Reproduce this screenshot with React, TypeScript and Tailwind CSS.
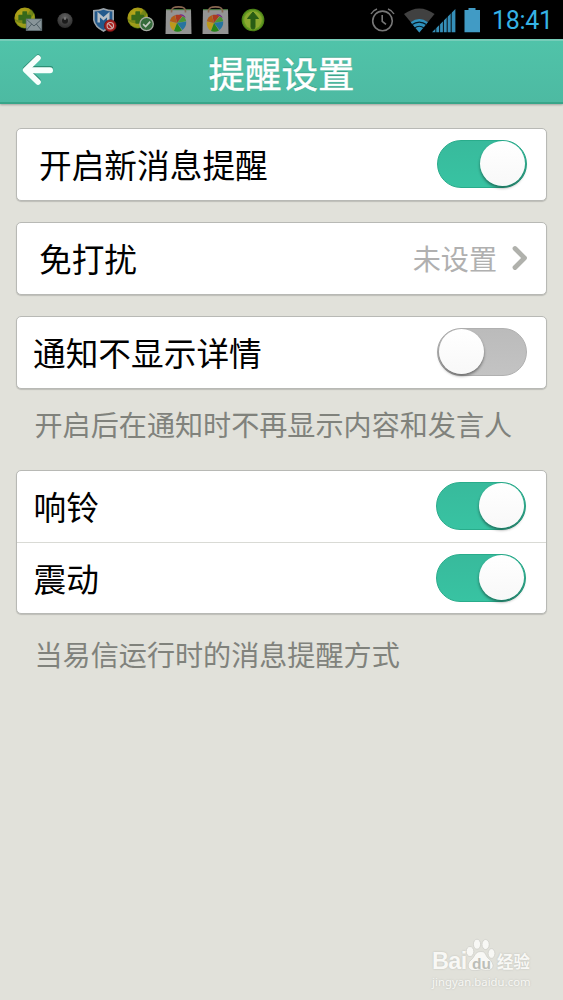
import type { ReactNode } from 'react';

const FONT = "font-['Noto_Sans_CJK_SC',sans-serif]";

function CloverBadge({ kind }: { kind: 'mail' | 'check' }) {
  return (
    <svg width="30" height="28" viewBox="0 0 30 28" className="shrink-0">
      <defs>
        <radialGradient id={`clover-${kind}`} cx="35%" cy="30%" r="75%">
          <stop offset="0" stopColor="#b5a81c" />
          <stop offset="0.65" stopColor="#9b9212" />
          <stop offset="1" stopColor="#28650f" />
        </radialGradient>
      </defs>
      <circle cx="10.8" cy="12" r="10.4" fill={`url(#clover-${kind})`} />
      <path d="M1 13C6 17 15 7 17 3C24 8 22 20 11 22.4C6 22.4 1 18 1 13Z" fill="#36711b" opacity=".4" />
      <path d="M2 15C8 20 16 16 20 7C23 16 17 22 10.500 22C6 21 3 19 2 15Z" fill="#b0a61c" opacity=".75" />
      <path d="M9 6h3.5v3.5h4v4h-4V17H9v-3.5H5v-4h4z" fill="#37691a" stroke="#37691a" strokeWidth="1.3" strokeLinejoin="round" />
      {kind === 'mail' ? (
        <g>
          <rect x="12.2" y="13" width="15.6" height="11.5" fill="#889599" stroke="#66777c" strokeWidth=".7" />
          <path d="M12.700 13.5l7.300 6.5 7.300-6.5M12.700 24l5-6M27.300 24l-5-6" fill="none" stroke="#46575d" strokeWidth=".9" />
        </g>
      ) : (
        <g>
          <circle cx="19.600" cy="18" r="6.7" fill="#356b3b" stroke="#a4aaa2" strokeWidth="1.3" />
          <path d="M16.1 18.2l2.5 2.4 4.6-5" fill="none" stroke="#c4cbc2" strokeWidth="1.7" />
        </g>
      )}
    </svg>
  );
}

function DotIcon() {
  return (
    <svg width="16" height="17" viewBox="0 0 16 17">
      <defs>
        <radialGradient id="dot" cx="50%" cy="30%" r="70%">
          <stop offset="0" stopColor="#626262" />
          <stop offset="1" stopColor="#2b2b2b" />
        </radialGradient>
      </defs>
      <circle cx="8" cy="8.5" r="7.6" fill="url(#dot)" />
      <circle cx="8" cy="8.8" r="3" fill="#1b1b1b" />
      <circle cx="8" cy="6.5" r="1.4" fill="#777" />
    </svg>
  );
}

function ShieldIcon() {
  return (
    <svg width="25" height="25" viewBox="0 0 25 25">
      <path d="M0 2Q6 2 10.500 0Q15 2 21 2V12Q20 19 10.500 24Q1 19 0 12Z" fill="#9aa3aa" />
      <path d="M1.700 3.5Q7 3.4 10.500 1.8Q14 3.4 19.3 3.5V12Q18.5 18 10.500 22Q2.5 18 1.700 12Z" fill="#235a8d" />
      <path d="M5.700 14.5V6.600l4.8 4.2 4.8-4.2v7.9" fill="none" stroke="#b8c0c6" strokeWidth="2.5" />
      <circle cx="17.300" cy="17.7" r="5.9" fill="#a51f1e" stroke="#691312" strokeWidth=".7" />
      <circle cx="17.300" cy="17.7" r="3.2" fill="none" stroke="#cfb0ae" strokeWidth="1.1" />
      <path d="M15.1 15.4l4.4 4.6" stroke="#cfb0ae" strokeWidth="1.1" />
    </svg>
  );
}

function BagIcon() {
  return (
    <svg width="27" height="29" viewBox="0 0 27 29">
      <path d="M1 3h25l.5 25H.5z" fill="#949494" />
      <path d="M1 3h25v1.2H1z" fill="#47713f" />
      <path d="M6.5 6.5C6 1 10 .9 13.5 .9S21 1 20.5 6.5" fill="none" stroke="#886650" strokeWidth="1.6" />
      <path d="M12 17L4.8 15.7C4.5 20 6 23.2 8.7 24.8Z" fill="#bd991b" />
      <path d="M12 17L4.8 15.3C5.7 12 7.5 10 10 9.2Z" fill="#b15d18" />
      <path d="M12 17L10.3 9C13 8.3 15.5 8.6 17.6 9.8Z" fill="#ab3a21" />
      <path d="M12 17L17.8 10.2C20 11.6 21 13.4 21.2 15.2Z" fill="#4c9632" />
      <path d="M12 17L21.2 15.6C21.5 19 20 22 17.5 24Z" fill="#26749e" />
      <path d="M12 17L17 24.4C14.5 26 11.5 26.2 9 25Z" fill="#278619" />
      <path d="M14 8.4q5-1 6.6 3.5q-2-2-6.6-3.5z" fill="#78298b" />
    </svg>
  );
}

function UploadIcon() {
  return (
    <svg width="24" height="24" viewBox="0 0 24 24">
      <circle cx="12" cy="12" r="10.8" fill="#659922" stroke="#4e8518" strokeWidth="1.1" />
      <circle cx="12" cy="12" r="8.8" fill="#9aae33" opacity=".7" />
      <path d="M12 4l5.5 6.5h-3.5v8.5q0 2-2 2t-2-2v-8.500H6.500z" fill="#285c15" stroke="#285c15" strokeLinejoin="round" />
    </svg>
  );
}

function AlarmIcon() {
  return (
    <svg width="26" height="25" viewBox="0 0 26 25" fill="none" stroke="#777" strokeWidth="1.6">
      <circle cx="12.5" cy="12.9" r="9.8" />
      <path d="M12.2 7v6.3l3.8 3.1" />
      <path d="M1 6Q3 2.5 7 1M18 1q4 1.5 6 5" strokeWidth="1.5" />
    </svg>
  );
}

function WifiIcon() {
  return (
    <svg width="31" height="25" viewBox="0 0 31 25">
      <path d="M0 6Q15.3-5.2 30.6 6L15.3 24.5Z" fill="#414141" />
      <path d="M6.700 14.2Q15.3 7.8 23.9 14.2L15.3 24.5Z" fill="#2f91bd" />
      <path d="M7.8 16.800Q15.3 11.500 22.800 16.800M10.5 20q4.800-3.500 9.600 0" fill="none" stroke="#061a25" strokeWidth="1.2" />
    </svg>
  );
}

function SignalIcon() {
  return (
    <svg width="24" height="25" viewBox="0 0 24 25">
      <path d="M0 24.3L23.4 1v23.3z" fill="#358fb9" />
      <path d="M3.8 19v6M7.6 15v10M11.4 11v14M15.2 7v18M19.2 3v22" stroke="#000" strokeWidth="0.9" />
    </svg>
  );
}

function BatteryIcon() {
  return (
    <svg width="17" height="25" viewBox="0 0 17 25">
      <path d="M4.5 0h7v2H16v22.2H.5V2h4z" fill="#419bc5" />
    </svg>
  );
}

function StatusBar() {
  return (
    <div className="flex h-[39px] items-center bg-black pt-px">
      <div className="ml-[14px] flex w-[251px] items-center">
        <CloverBadge kind="mail" />
        <div className="ml-[13px]"><DotIcon /></div>
        <div className="ml-5"><ShieldIcon /></div>
        <div className="ml-[9px]"><CloverBadge kind="check" /></div>
        <div className="ml-[8px]"><BagIcon /></div>
        <div className="ml-[10px]"><BagIcon /></div>
        <div className="ml-[12px]"><UploadIcon /></div>
      </div>
      <div className="ml-[105px] flex items-center">
        <AlarmIcon />
        <div className="ml-[8px]"><WifiIcon /></div>
        <div className="ml-[-3px]"><SignalIcon /></div>
        <div className="ml-[8px]"><BatteryIcon /></div>
        <span className="ml-[11px] whitespace-nowrap pt-px font-[Roboto,sans-serif] text-[25px] leading-[37px] tracking-[-0.3px] text-[#35b3e5]">18:41</span>
      </div>
    </div>
  );
}

function Header() {
  return (
    <header className="flex h-[65px] border-t-2 border-b-2 border-t-[#76cdb9] border-b-[#38a589] bg-linear-to-b from-[#50c3a9] to-[#4dbaa2] shadow-[0_1px_2px_rgba(0,0,0,0.28)]">
      <svg width="36" height="40" viewBox="0 0 36 40" className="mt-[9px] ml-[20px] shrink-0" fill="none" strokeLinecap="round" strokeLinejoin="round">
        <path d="M18 7.2L5.600 18.800L18 30.5M6.600 18.8H30.500" stroke="#2b8e75" strokeWidth="5.4" />
        <path d="M18 8L5.700 20L18 32" stroke="#f8fffd" strokeWidth="5.6" />
        <path d="M7 20.300H30" stroke="#f8fffd" strokeWidth="6" />
      </svg>
      <h1 className="ml-[152.5px] text-[36.5px] leading-[64px] font-normal whitespace-nowrap text-white [-webkit-text-stroke:0.5px_white] [text-shadow:0_-1px_1px_rgba(20,100,80,0.4)]">提醒设置</h1>
    </header>
  );
}

function Toggle({ on }: { on: boolean }) {
  return (
    <span
      role="switch"
      aria-checked={on}
      className={
        on
          ? 'flex h-12 w-[89.5px] shrink-0 items-start justify-end rounded-full border border-[#29ac8b] bg-linear-to-b from-[#38ba9c] to-[#38c3a2] pr-px'
          : 'flex h-12 w-[89.5px] shrink-0 items-start justify-start rounded-full border border-[#b0b0b0] bg-linear-to-b from-[#bbbbbb] to-[#c3c3c3] pl-px'
      }
    >
      <span className="size-[45px] rounded-full bg-linear-to-b from-white to-[#f8f8f8] shadow-[0_2px_3px_rgba(0,0,0,0.45)]" />
    </span>
  );
}

function Card({ children }: { children: ReactNode }) {
  return (
    <section className="rounded-[5px] border-[1.5px] border-[#b8b9b5] bg-white shadow-[0_1px_1px_rgba(0,0,0,0.16)]">
      {children}
    </section>
  );
}

function Label({ children }: { children: ReactNode }) {
  return <span className="text-[32.7px] leading-[48px] whitespace-nowrap">{children}</span>;
}

function Hint({ children }: { children: ReactNode }) {
  return <p className="text-[28.1px] leading-[42px] whitespace-nowrap text-[#80827c]">{children}</p>;
}

function Watermark() {
  return (
    <div className="flex w-[102px] flex-col font-['Liberation_Sans',sans-serif] text-[#f8f8f5] [text-shadow:0_0_2px_#b9bab4]">
      <div className="flex h-[33px] items-end">
        <span className="w-[34px] text-[23.5px] leading-[22px] font-bold tracking-[-0.7px]">Bai</span>
        <svg width="30" height="34" viewBox="0 0 30 34" className="shrink-0">
          <g fill="#f8f8f5" stroke="#cbccc6" strokeWidth=".7">
            <ellipse cx="4" cy="13.5" rx="3.8" ry="5" />
            <ellipse cx="11" cy="6.2" rx="3.6" ry="5" />
            <ellipse cx="19.600" cy="6.5" rx="3.6" ry="5" />
            <ellipse cx="25.5" cy="15.500" rx="3.4" ry="4.8" />
            <path d="M15 13.500C8.500 13.500 9 19 5 22C1 25 1 32 7 32.500Q11 33 15 31.500Q20 33 24 32C30 29 26 23 22 20C19 17 20 13.500 15 13.500Z" />
          </g>
          <text x="6" y="31" fontSize="15.5" fontWeight="bold" fill="#bdbeb8" fontFamily="Liberation Sans" className="[text-shadow:none]">du</text>
        </svg>
        <span className="ml-px font-['Noto_Sans_CJK_SC',sans-serif] text-[16.5px] leading-[21px] font-bold whitespace-nowrap">经验</span>
      </div>
      <span className="pt-[2px] font-['Noto_Sans',sans-serif] text-[11.3px] leading-[15px] whitespace-nowrap tracking-[0.05px]">jingyan.baidu.com</span>
    </div>
  );
}

export default function App() {
  return (
    <div className={`${FONT} flex h-[1000px] w-[563px] flex-col overflow-hidden bg-[#e1e1da] text-black`}>
      <StatusBar />
      <Header />
      <main className="flex flex-1 flex-col pt-6 pr-4 pl-4">
        <div className="flex flex-col gap-[21px]">
          <Card>
            <div className="flex h-[71px] items-center justify-between pr-[19.5px] pb-[2px] pl-[22px]">
              <Label>开启新消息提醒</Label>
              <Toggle on />
            </div>
          </Card>
          <Card>
            <div className="flex h-[71px] items-center pr-[17px] pb-px pl-[22px]">
              <Label>免打扰</Label>
              <span className="ml-auto text-[28.1px] leading-[42px] text-[#b0b0b0]">未设置</span>
              <svg width="18" height="26" viewBox="0 0 18 26" className="ml-[14px]" fill="none" stroke="#b0b1ac" strokeWidth="4.8" strokeLinecap="round" strokeLinejoin="round">
                <path d="M4 3.5L13.5 13L4 22.5" />
              </svg>
            </div>
          </Card>
          <Card>
            <div className="flex h-[71px] items-center justify-between pr-[19.5px] pb-[2px] pl-[16px]">
              <Label>通知不显示详情</Label>
              <Toggle on={false} />
            </div>
          </Card>
        </div>
        <div className="flex h-[81px] items-center pb-[11px] pl-[18.5px]">
          <Hint>开启后在通知时不再显示内容和发言人</Hint>
        </div>
        <Card>
          <div className="flex h-[71px] items-center justify-between pr-[20.5px] pb-[2px] pl-[16.5px]">
            <Label>响铃</Label>
            <Toggle on />
          </div>
          <div className="flex h-[71px] items-center justify-between border-t border-[#d9dad5] pr-[20.5px] pb-px pl-[16.5px]">
            <Label>震动</Label>
            <Toggle on />
          </div>
        </Card>
        <div className="flex h-[84px] items-center pb-[4px] pl-[18.5px]">
          <Hint>当易信运行时的消息提醒方式</Hint>
        </div>
        <footer className="mt-auto mr-[13px] mb-[11px] flex justify-end">
          <Watermark />
        </footer>
      </main>
    </div>
  );
}
